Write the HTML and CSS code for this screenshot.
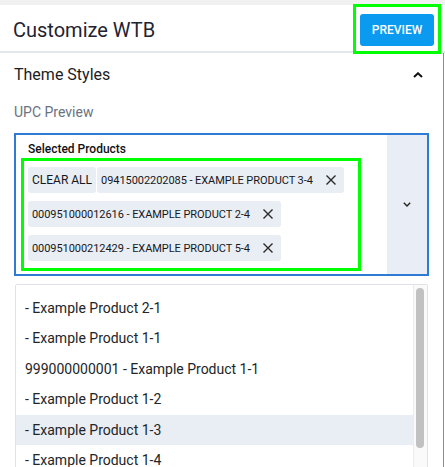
FILE: index.html
```html
<!DOCTYPE html>
<html lang="en">
<head>
<meta charset="utf-8">
<title>Customize WTB</title>
<link rel="stylesheet" href="styles.css">
</head>
<body>
<div class="topstrip"></div>
<header class="header">
  <h1 class="title">Customize WTB</h1>
  <div class="preview-wrap"><button class="preview">PREVIEW</button></div>
</header>
<section class="panel">
  <div class="section-head">
    <span class="section-title">Theme Styles</span>
    <svg class="chev-up" width="10" height="6" viewBox="0 0 10 6"><polyline points="1,5 5,1.3 9,5" fill="none" stroke="#111" stroke-width="2"/></svg>
  </div>
  <div class="field-label">UPC Preview</div>
  <div class="select">
    <div class="select-main">
      <div class="select-label">Selected Products</div>
      <div class="chips">
        <span class="chip chip-clear">CLEAR ALL</span>
        <span class="chip">09415002202085 - EXAMPLE PRODUCT 3-4<svg class="x" width="10" height="10" viewBox="0 0 10 10"><path d="M0.5 0.5 L9.5 9.5 M9.5 0.5 L0.5 9.5" stroke="#2a2a2a" stroke-width="1.4"/></svg></span>
        <span class="chip">000951000012616 - EXAMPLE PRODUCT 2-4<svg class="x" width="10" height="10" viewBox="0 0 10 10"><path d="M0.5 0.5 L9.5 9.5 M9.5 0.5 L0.5 9.5" stroke="#2a2a2a" stroke-width="1.4"/></svg></span>
        <span class="chip">000951000212429 - EXAMPLE PRODUCT 5-4<svg class="x" width="10" height="10" viewBox="0 0 10 10"><path d="M0.5 0.5 L9.5 9.5 M9.5 0.5 L0.5 9.5" stroke="#2a2a2a" stroke-width="1.4"/></svg></span>
      </div>
    </div>
    <div class="select-toggle">
      <svg width="8" height="5" viewBox="0 0 8 5"><polyline points="0.8,0.8 4,4 7.2,0.8" fill="none" stroke="#222" stroke-width="1.4"/></svg>
    </div>
  </div>
  <div class="list">
    <div class="list-items">
      <div class="item">- Example Product 2-1</div>
      <div class="item">- Example Product 1-1</div>
      <div class="item">999000000001 - Example Product 1-1</div>
      <div class="item">- Example Product 1-2</div>
      <div class="item item-active">- Example Product 1-3</div>
      <div class="item">- Example Product 1-4</div>
    </div>
    <div class="scrolltrack"><div class="thumb"></div></div>
  </div>
</section>
</body>
</html>
```
FILE: styles.css
```css
html, body {
  margin: 0;
  padding: 0;
  overflow: hidden;
  background: #ffffff;
}
body {
  font-family: Roboto, "Liberation Sans", sans-serif;
  color: #212529;
  width: 445px;
  height: 467px;
}
.topstrip {
  height: 5px;
  background: #f1f1f1;
}
.header {
  height: 46px;
  border-bottom: 2px solid #e3e6ea;
  display: flex;
  justify-content: space-between;
  align-items: flex-start;
  padding: 0 11px 0 13px;
}
.title {
  margin: 13px 0 0 0;
  font-size: 20px;
  line-height: 24px;
  font-weight: 400;
  color: #1f2330;
}
.preview-wrap {
  position: relative;
  margin-top: 9px;
}
.preview-wrap::after {
  content: "";
  position: absolute;
  top: -10px;
  left: -7px;
  right: -7px;
  bottom: -8px;
  border: 3px solid #00ff00;
}
.preview {
  display: block;
  width: 74px;
  height: 32px;
  border: none;
  border-radius: 3px;
  background: #0a9af0;
  color: #ffffff;
  font-family: Roboto, "Liberation Sans", sans-serif;
  font-size: 12px;
  font-weight: 500;
  padding: 0;
}
.panel {
  width: 444px;
  box-sizing: border-box;
  border-right: 1px solid #8c8c8c;
  padding: 12px 14px 0 14px;
  height: 414px;
  overflow: hidden;
}
.section-head {
  display: flex;
  justify-content: space-between;
  align-items: center;
  height: 19px;
}
.section-title {
  font-size: 16px;
  line-height: 19px;
  color: #1a1d24;
}
.chev-up {
  margin-right: 6px;
}
.field-label {
  margin-top: 20px;
  font-size: 14px;
  line-height: 16px;
  color: #6b7280;
}
.select {
  margin-top: 13px;
  border: 2px solid #2f7bd3;
  display: flex;
  height: 139px;
}
.select-main {
  flex: 1;
  padding: 7px 33px 0 12px;
}
.select-label {
  font-size: 12px;
  line-height: 14px;
  font-weight: 500;
  color: #111;
}
.chips {
  position: relative;
  margin-top: 11px;
  display: flex;
  flex-wrap: wrap;
  column-gap: 1px;
  row-gap: 8px;
}
.chips::after {
  content: "";
  position: absolute;
  top: -9px;
  left: -7px;
  right: -7px;
  bottom: -10px;
  border: 3px solid #00ff00;
}
.chip {
  display: inline-flex;
  align-items: center;
  height: 26px;
  padding: 0 8px 0 4px;
  background: #e9edf4;
  border-radius: 3px;
  font-size: 11px;
  font-weight: 400;
  letter-spacing: -0.06px;
  color: #15181c;
  white-space: nowrap;
}
.chip-clear {
  padding: 0 4px;
  font-size: 12px;
  letter-spacing: 0;
}
.chip .x {
  margin-left: 13px;
}
.select-toggle {
  width: 40px;
  background: #e9edf5;
  display: flex;
  align-items: center;
  justify-content: center;
}
.list {
  margin: 8px 1px 0 1px;
  border: 1px solid #dfe2e7;
  border-radius: 2px;
  display: flex;
  height: 240px;
}
.list-items {
  flex: 1;
  padding-top: 8px;
  border-right: 1px solid #ececec;
}
.item {
  height: 30.4px;
  line-height: 30.4px;
  padding-left: 9px;
  font-size: 14px;
  color: #212529;
}
.item-active {
  background: #e9edf4;
}
.scrolltrack {
  width: 13px;
  background: #fafafa;
  padding: 3px 3px 0 2px;
  box-sizing: border-box;
}
.thumb {
  height: 160px;
  background: #c1c1c1;
  border-radius: 4px;
}
```
